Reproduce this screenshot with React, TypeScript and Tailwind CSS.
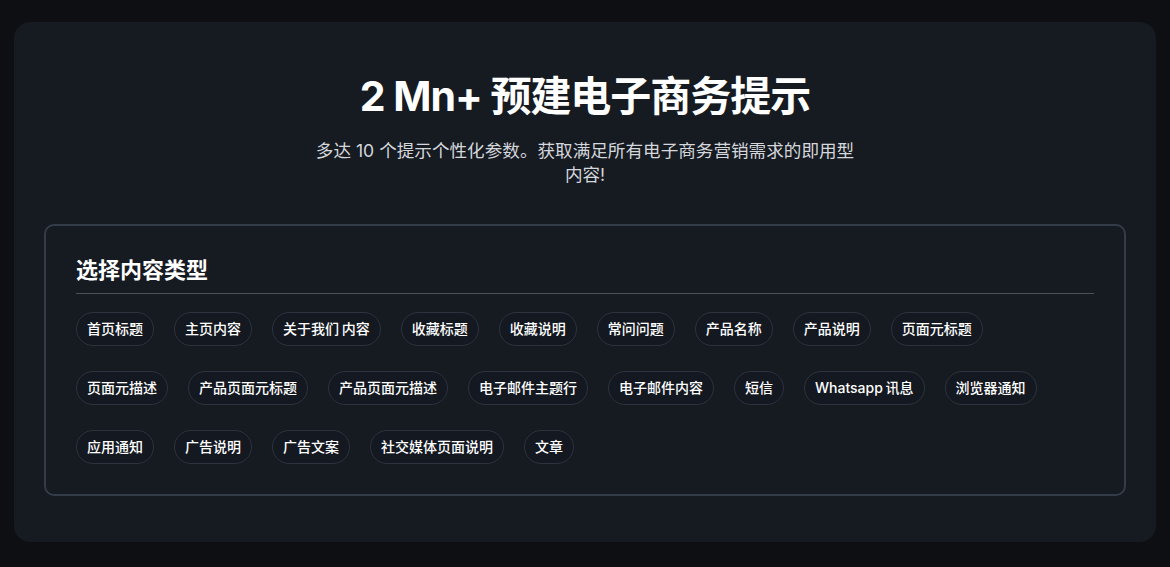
import React from "react";

const contentTypes = [
  "首页标题",
  "主页内容",
  "关于我们 内容",
  "收藏标题",
  "收藏说明",
  "常问问题",
  "产品名称",
  "产品说明",
  "页面元标题",
  "页面元描述",
  "产品页面元标题",
  "产品页面元描述",
  "电子邮件主题行",
  "电子邮件内容",
  "短信",
  "Whatsapp 讯息",
  "浏览器通知",
  "应用通知",
  "广告说明",
  "广告文案",
  "社交媒体页面说明",
  "文章",
];

function Chip({ label }: { label: string }) {
  return (
    <button className="h-[34px] px-[10px] rounded-full border border-[#2d333e] bg-[#141820] text-[14px] leading-5 font-medium text-white [word-spacing:-1px]">
      {label}
    </button>
  );
}

export default function App() {
  return (
    <div
      className="min-h-[567px] bg-[#0d0f13] px-[14px] pt-[22px] pb-[25px]"
      style={{ fontFamily: "Inter, 'Noto Sans CJK SC', sans-serif" }}
    >
      <div className="rounded-2xl bg-[#161a21] px-[30px] pt-[51px] pb-[46px]">
        <h1 className="text-center text-[41px] leading-[46px] font-bold text-white tracking-tight">
          2 Mn+ 预建电子商务提示
        </h1>
        <p className="mx-auto mt-[20px] max-w-[548px] text-center text-[17.6px] leading-6 text-[#d4d7dc]">
          多达 10 个提示个性化参数。获取满足所有电子商务营销需求的即用型内容!
        </p>

        <div className="mt-[37px] rounded-[10px] border-2 border-[#353c49] px-[30px] pt-[29px] pb-[30px]">
          <h2 className="text-[22px] leading-[30px] font-bold text-white pb-[8px] border-b border-[#4a505c]">
            选择内容类型
          </h2>
          <div className="mt-[18px] pr-1 flex flex-wrap gap-x-[20px] gap-y-[25px]">
            {contentTypes.map((t) => (
              <Chip key={t} label={t} />
            ))}
          </div>
        </div>
      </div>
    </div>
  );
}
